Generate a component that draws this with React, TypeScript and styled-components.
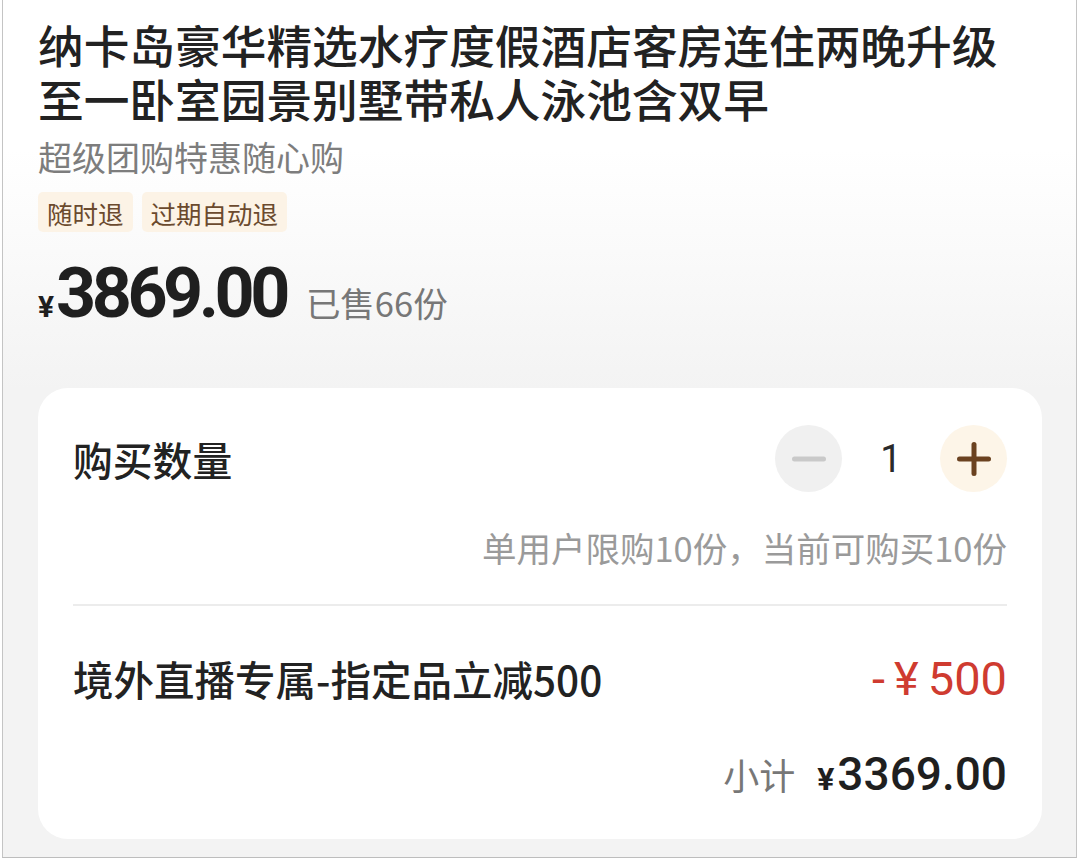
import React from "react";
import styled, { createGlobalStyle } from "styled-components";

const GlobalStyle = createGlobalStyle`
  html, body { margin: 0; padding: 0; background: #ffffff; }
  * { box-sizing: border-box; }
`;

const CJK = `"Noto Sans CJK SC", "Noto Sans", sans-serif`;
const NUM = `Roboto, "Noto Sans CJK SC", sans-serif`;

const Frame = styled.div`
  width: 1075px;
  height: 858px;
  margin-left: 2px;
  border-left: 1px solid #c4c4c4;
  border-right: 1px solid #c4c4c4;
  border-bottom: 1px solid #bdbdbd;
  background: linear-gradient(180deg, #ffffff 0px, #ffffff 150px, #f3f3f3 390px, #f3f3f3 100%);
  padding: 17px 34px 0 35px;
  font-family: ${CJK};
  display: flex;
  flex-direction: column;
`;

const Title = styled.h1`
  margin: 0;
  max-width: 985px;
  font-size: 45.7px;
  line-height: 54px;
  font-weight: 500;
  color: #222222;
`;

const Subtitle = styled.div`
  margin-top: 12px;
  font-size: 34px;
  line-height: 40px;
  color: #7d7d7d;
`;

const TagRow = styled.div`
  margin-top: 15px;
  display: flex;
  gap: 9px;
`;

const Tag = styled.span`
  height: 40px;
  padding: 0 9px;
  display: inline-flex;
  align-items: center;
  background: #fcf3e6;
  color: #6b4a2e;
  font-size: 25.5px;
  border-radius: 5px;
`;

const PriceRow = styled.div`
  margin-top: 21px;
  display: flex;
  align-items: baseline;
  height: 80px;
  line-height: 80px;
`;

const Yen = styled.span<{ $size: number }>`
  font-family: ${NUM};
  font-weight: 700;
  font-size: ${(p) => p.$size}px;
  color: #1f1f1f;
`;

const BigPrice = styled.span`
  font-family: ${NUM};
  font-weight: 700;
  font-size: 70px;
  letter-spacing: -4.5px;
  color: #1f1f1f;
  margin-left: 2px;
`;

const Sold = styled.span`
  margin-left: 20px;
  font-size: 34.5px;
  color: #777777;
`;

const Card = styled.div`
  margin-top: 55px;
  background: #ffffff;
  border-radius: 30px;
  padding: 37px 35px 37px 35px;
  display: flex;
  flex-direction: column;
`;

const Row = styled.div`
  display: flex;
  align-items: center;
  justify-content: space-between;
`;

const Label = styled.span`
  font-size: 39.8px;
  color: #222222;
  font-weight: 500;
`;

const Stepper = styled.div`
  display: flex;
  align-items: center;
`;

const CircleBtn = styled.button<{ $variant: "minus" | "plus" }>`
  width: 67px;
  height: 67px;
  border-radius: 50%;
  border: none;
  padding: 0;
  display: flex;
  align-items: center;
  justify-content: center;
  background: ${(p) => (p.$variant === "plus" ? "#fdf5e8" : "#f0f0f0")};
`;

const Qty = styled.span`
  width: 98px;
  text-align: center;
  font-family: ${NUM};
  font-size: 38px;
  color: #2a2a2a;
`;

const Limit = styled.div`
  margin-top: 34px;
  text-align: right;
  font-size: 34.5px;
  line-height: 42px;
  color: #9a9a9a;
`;

const Divider = styled.div`
  margin-top: 36px;
  height: 2px;
  background: #ececec;
`;

const DiscountRow = styled(Row)`
  margin-top: 46px;
  height: 52px;
`;

const DiscountLabel = styled.span`
  font-size: 40.5px;
  color: #222222;
  font-weight: 500;
`;

const DiscountValue = styled.span`
  font-family: ${NUM};
  font-size: 47px;
  color: #cf3b30;
  display: flex;
  align-items: baseline;
  gap: 9px;
`;

const SubtotalRow = styled.div`
  margin-top: 42px;
  display: flex;
  justify-content: flex-end;
  align-items: baseline;
  height: 56px;
  line-height: 56px;
`;

const SubLabel = styled.span`
  font-size: 36px;
  color: #777777;
  margin-right: 22px;
`;

const SubPrice = styled.span`
  font-family: ${NUM};
  font-weight: 500;
  font-size: 46px;
  color: #1f1f1f;
  margin-left: 3px;
`;

const MinusIcon = () => (
  <svg width="34" height="34" viewBox="0 0 34 34">
    <line x1="2.5" y1="17" x2="31.5" y2="17" stroke="#c9c9c9" strokeWidth="5" strokeLinecap="round" />
  </svg>
);

const PlusIcon = () => (
  <svg width="34" height="34" viewBox="0 0 34 34">
    <line x1="2.5" y1="17" x2="31.5" y2="17" stroke="#6b4220" strokeWidth="5" strokeLinecap="round" />
    <line x1="17" y1="2.5" x2="17" y2="31.5" stroke="#6b4220" strokeWidth="5" strokeLinecap="round" />
  </svg>
);

export default function App() {
  return (
    <>
      <GlobalStyle />
      <Frame>
        <Title>纳卡岛豪华精选水疗度假酒店客房连住两晚升级至一卧室园景别墅带私人泳池含双早</Title>
        <Subtitle>超级团购特惠随心购</Subtitle>
        <TagRow>
          <Tag>随时退</Tag>
          <Tag>过期自动退</Tag>
        </TagRow>
        <PriceRow>
          <Yen $size={30}>¥</Yen>
          <BigPrice>3869.00</BigPrice>
          <Sold>已售66份</Sold>
        </PriceRow>
        <Card>
          <Row>
            <Label>购买数量</Label>
            <Stepper>
              <CircleBtn $variant="minus" aria-label="减少">
                <MinusIcon />
              </CircleBtn>
              <Qty>1</Qty>
              <CircleBtn $variant="plus" aria-label="增加">
                <PlusIcon />
              </CircleBtn>
            </Stepper>
          </Row>
          <Limit>单用户限购10份，当前可购买10份</Limit>
          <Divider />
          <DiscountRow>
            <DiscountLabel>境外直播专属-指定品立减500</DiscountLabel>
            <DiscountValue>
              <span>-</span>
              <span>¥</span>
              <span>500</span>
            </DiscountValue>
          </DiscountRow>
          <SubtotalRow>
            <SubLabel>小计</SubLabel>
            <Yen $size={32}>¥</Yen>
            <SubPrice>3369.00</SubPrice>
          </SubtotalRow>
        </Card>
      </Frame>
    </>
  );
}
